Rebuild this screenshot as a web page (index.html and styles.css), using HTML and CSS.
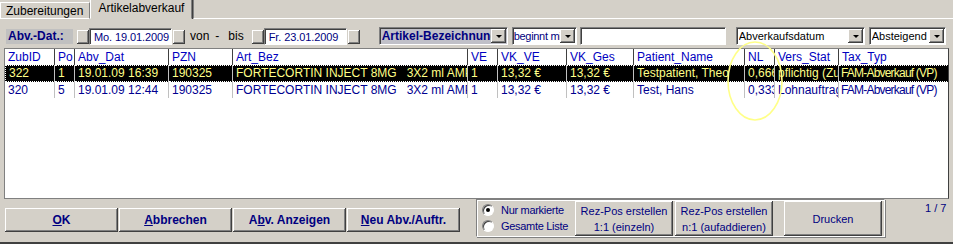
FILE: index.html
```html
<!DOCTYPE html>
<html lang="de">
<head>
    <meta charset="UTF-8">
    <title>Artikelabverkauf</title>
    <link rel="stylesheet" href="styles.css">
</head>
<body>

    <div class="window">
        <div class="tabs">
            <div class="tab">Zubereitungen</div>
            <div class="tab active">Artikelabverkauf</div>
            <div class="tab-rest"></div>
        </div>

        <div class="filter">
            <div class="label-box">Abv.-Dat.:</div>
            <div class="sq-btn"></div>
            <div class="date-box">Mo. 19.01.2009</div>
            <div class="sq-btn"></div>
            <span class="txt von">von</span>
            <span class="txt dash">-</span>
            <span class="txt bis">bis</span>
            <div class="sq-btn"></div>
            <div class="date-box">Fr. 23.01.2009</div>
            <div class="sq-btn"></div>

            <div class="combo combo-field">
                <span class="combo-text">Artikel-Bezeichnung</span>
                <span class="drop"><i></i></span>
            </div>
            <div class="combo combo-mode">
                <span class="combo-text">beginnt mit</span>
                <span class="drop"><i></i></span>
            </div>
            <div class="search-box"></div>
            <div class="combo combo-sort">
                <span class="combo-text">Abverkaufsdatum</span>
                <span class="drop"><i></i></span>
            </div>
            <div class="combo combo-dir">
                <span class="combo-text">Absteigend</span>
                <span class="drop"><i></i></span>
            </div>
        </div>

        <div class="grid">
            <table>
                <colgroup>
                    <col class="w-id"><col class="w-po"><col class="w-dat"><col class="w-pzn">
                    <col class="w-bez"><col class="w-ve"><col class="w-vkve"><col class="w-vkges">
                    <col class="w-pat"><col class="w-nl"><col class="w-vers"><col class="w-tax">
                </colgroup>
                <thead>
                    <tr>
                        <th>ZubID</th><th>Po</th><th>Abv_Dat</th><th>PZN</th>
                        <th>Art_Bez</th><th>VE</th><th>VK_VE</th><th>VK_Ges</th>
                        <th>Patient_Name</th><th>NL</th><th>Vers_Stat</th><th>Tax_Typ</th>
                    </tr>
                </thead>
                <tbody>
                    <tr class="selected">
                        <td>322</td><td>1</td><td>19.01.09 16:39</td><td>190325</td>
                        <td>FORTECORTIN INJECT 8MG&nbsp;&nbsp;&nbsp;3X2 ml AMP</td><td>1</td><td>13,32 €</td><td>13,32 €</td>
                        <td>Testpatient, Theo</td><td>0,666</td><td>pflichtig (Zuz.)</td><td class="tax">FAM-Abverkauf (VP)</td>
                    </tr>
                    <tr>
                        <td>320</td><td>5</td><td>19.01.09 12:44</td><td>190325</td>
                        <td>FORTECORTIN INJECT 8MG&nbsp;&nbsp;&nbsp;3X2 ml AMP</td><td>1</td><td>13,32 €</td><td>13,32 €</td>
                        <td>Test, Hans</td><td>0,333</td><td>Lohnauftrag</td><td class="tax">FAM-Abverkauf (VP)</td>
                    </tr>
                </tbody>
            </table>
        </div>

        <div class="bottom">
            <div class="actions">
                <button class="btn"><u>O</u>K</button>
                <button class="btn"><u>A</u>bbrechen</button>
                <button class="btn">A<u>b</u>v. Anzeigen</button>
                <button class="btn"><u>N</u>eu Abv./Auftr.</button>
            </div>

            <div class="group">
                <div class="radios">
                    <label class="radio"><span class="dot checked"></span>Nur markierte</label>
                    <label class="radio"><span class="dot"></span>Gesamte Liste</label>
                </div>
                <button class="btn plain rez">Rez-Pos erstellen<br>1:1 (einzeln)</button>
                <button class="btn plain rez">Rez-Pos erstellen<br>n:1 (aufaddieren)</button>
                <button class="btn plain print">Drucken</button>
            </div>

            <div class="pager">1 / 7</div>
        </div>

        <svg class="mark" width="60" height="84" viewBox="0 0 60 84">
            <ellipse cx="30" cy="42" rx="27" ry="39" fill="none" stroke="#ffff88" stroke-width="1.6"/>
        </svg>
    </div>

</body>
</html>
```

FILE: styles.css
```css
body {
    margin: 0;
    padding: 0;
    background-color: #d4d0c8;
    font-family: "Liberation Sans", Arial, sans-serif;
    font-size: 12px;
    color: #000080;
}
.window {
    position: relative;
    width: 953px;
    height: 244px;
    overflow: hidden;
    border-bottom: 2px solid #404040;
    box-sizing: border-box;
}

/* tabs */
.tabs {
    display: flex;
    align-items: flex-end;
    height: 19px;
}
.tab {
    height: 15px;
    padding: 0 6px 0 5px;
    line-height: 16px;
    color: #000;
    border-top: 1px solid #fff;
    border-left: 1px solid #fff;
    border-right: 1px solid #808080;
    border-bottom: 1px solid #fff;
    white-space: nowrap;
}
.tab.active {
    height: 18px;
    line-height: 17px;
    padding: 0 7px 0 7px;
    border-bottom: 1px solid #d4d0c8;
    box-shadow: 1px 0 0 #404040;
}
.tab-rest {
    flex: 1;
    border-bottom: 1px solid #fff;
    border-left: 1px solid #808080;
    height: 18px;
    margin-left: 1px;
}

/* filter row */
.filter {
    display: flex;
    align-items: center;
    height: 18px;
    margin-top: 8px;
    padding-left: 6px;
    white-space: nowrap;
}
.filter > * {
    flex: none;
}
.label-box {
    width: 67px;
    height: 15px;
    line-height: 15px;
    background: #c0c0c0;
    font-weight: bold;
    padding-left: 2px;
    box-sizing: border-box;
}
.sq-btn {
    width: 12px;
    height: 14px;
    background: #d4d0c8;
    box-shadow: inset -1px -1px 0 #404040, inset 1px 1px 0 #fff, inset -2px -2px 0 #808080;
    margin-top: 1px;
}
.label-box + .sq-btn {
    margin-left: 4px;
}
.date-box {
    width: 83px;
    height: 17px;
    line-height: 16px;
    font-size: 11px;
    letter-spacing: -0.1px;
    background: #fff;
    border: 1px solid #808080;
    border-right-color: #fff;
    border-bottom-color: #fff;
    box-shadow: inset 1px 1px 0 #404040;
    box-sizing: border-box;
    padding-left: 4px;
}
.txt {
    color: #000;
}
.von { margin-left: 5px; }
.dash { margin-left: 6px; }
.bis { margin-left: 9px; }
.bis + .sq-btn { margin-left: 8px; }
.date-box + .sq-btn { margin-left: 1px; }

.combo {
    display: flex;
    height: 18px;
    box-sizing: border-box;
    border: 1px solid #808080;
    border-right-color: #fff;
    border-bottom-color: #fff;
    box-shadow: inset 1px 1px 0 #404040;
    background: #fff;
    padding: 1px 1px 1px 2px;
    overflow: hidden;
}
.combo-text {
    flex: 1;
    white-space: nowrap;
    overflow: hidden;
    line-height: 15px;
    font-size: 11px;
    color: #000080;
}
.drop {
    width: 15px;
    height: 14px;
    flex: none;
    background: #d4d0c8;
    box-shadow: inset -1px -1px 0 #404040, inset 1px 1px 0 #fff, inset -2px -2px 0 #808080;
    position: relative;
}
.drop i {
    position: absolute;
    left: 5px;
    top: 6px;
    border-left: 3px solid transparent;
    border-right: 3px solid transparent;
    border-top: 3px solid #000;
}
.combo-field {
    width: 129px;
    margin-left: 19px;
    background: #c0c0c8;
}
.combo-field .combo-text {
    font-weight: bold;
    font-size: 12px;
}
.combo-mode {
    width: 65px;
    margin-left: 4px;
    padding-left: 1px;
}
.combo-mode .combo-text {
    letter-spacing: -0.3px;
}
.search-box {
    width: 146px;
    height: 18px;
    margin-left: 3px;
    box-sizing: border-box;
    background: #fff;
    border: 1px solid #808080;
    border-right-color: #fff;
    border-bottom-color: #fff;
    box-shadow: inset 1px 1px 0 #404040;
}
.combo-sort {
    width: 129px;
    margin-left: 10px;
}
.combo-dir {
    width: 77px;
    margin-left: 4px;
}
.combo-sort .combo-text,
.combo-dir .combo-text {
    color: #000;
}

/* grid */
.grid {
    margin: 3px 4px 0 4px;
    height: 151px;
    background: #fff;
    border-top: 1px solid #808080;
    border-left: 1px solid #808080;
    border-right: 1px solid #404040;
    border-bottom: 1px solid #808080;
    box-sizing: border-box;
    overflow: hidden;
}
table {
    table-layout: fixed;
    border-collapse: separate;
    border-spacing: 0;
    width: 944px;
    white-space: nowrap;
}
.w-id { width: 50px; }
.w-po { width: 20px; }
.w-dat { width: 94px; }
.w-pzn { width: 64px; }
.w-bez { width: 235px; }
.w-ve { width: 30px; }
.w-vkve { width: 69px; }
.w-vkges { width: 67px; }
.w-pat { width: 111px; }
.w-nl { width: 30px; }
.w-vers { width: 64px; }
.w-tax { width: 110px; }
th, td {
    height: 16px;
    padding: 0 0 0 3px;
    overflow: hidden;
    text-align: left;
    font-weight: normal;
    font-size: 12px;
    line-height: 16px;
    box-sizing: border-box;
}
th {
    border-right: 1px solid #404040;
    color: #0000c0;
}
td {
    border-right: 1px solid #c0c0c0;
    color: #000090;
}
td.tax {
    padding-left: 2px;
    letter-spacing: -0.8px;
}
th:last-child, td:last-child {
    border-right: none;
}
tr.selected td {
    background: #000;
    color: #ffff88;
    border-top: 1px dotted #fff;
    border-bottom: 1px dotted #fff;
    height: 17px;
    line-height: 15px;
}
tr.selected td:first-child {
    border-left: 1px dotted #fff;
}
tr.selected td:last-child {
    border-right: 1px dotted #fff;
}

/* bottom bar */
.bottom {
    display: flex;
    align-items: flex-start;
    height: 38px;
}
.actions {
    display: flex;
    margin-top: 9px;
    margin-left: 5px;
}
.btn {
    font-family: "Liberation Sans", Arial, sans-serif;
    font-size: 12px;
    font-weight: bold;
    color: #000080;
    background: #d4d0c8;
    border: none;
    height: 24px;
    width: 113px;
    padding: 0;
    margin-right: 1px;
    flex: none;
    box-shadow: inset -1px -1px 0 #404040, inset 1px 1px 0 #fff, inset -2px -2px 0 #808080;
}
.group {
    display: flex;
    flex: none;
    margin-left: 15px;
    height: 38px;
    width: 409px;
    box-sizing: border-box;
    border: 1px solid #808080;
    border-right-color: #fff;
    border-bottom-color: #fff;
    box-shadow: inset 1px 1px 0 #fff, 1px 1px 0 #808080;
    padding-top: 1px;
}
.radios {
    display: flex;
    flex-direction: column;
    flex: none;
    width: 98px;
    padding: 1px 0 0 5px;
    box-sizing: border-box;
    white-space: nowrap;
}
.radio {
    display: flex;
    align-items: center;
    height: 16px;
    font-size: 11px;
    letter-spacing: -0.3px;
    color: #000080;
}
.dot {
    width: 10px;
    height: 10px;
    border-radius: 50%;
    background: #fff;
    border: 1px solid #808080;
    border-right-color: #fff;
    border-bottom-color: #fff;
    box-shadow: inset 1px 1px 0 #404040;
    margin-right: 7px;
    position: relative;
    flex: none;
}
.dot.checked::after {
    content: "";
    position: absolute;
    left: 3px;
    top: 3px;
    width: 4px;
    height: 4px;
    border-radius: 50%;
    background: #000;
}
.btn.plain {
    font-weight: normal;
    font-size: 11px;
    line-height: 16px;
}
.rez {
    width: 98px;
    height: 35px;
    margin-right: 2px;
}
.print {
    width: 98px;
    height: 35px;
    margin-left: 9px;
}
.pager {
    flex: none;
    margin-left: 40px;
    margin-top: 3px;
    font-size: 11px;
    color: #000080;
    white-space: nowrap;
}

/* annotation circle */
.mark {
    position: absolute;
    left: 725px;
    top: 39px;
}
```
